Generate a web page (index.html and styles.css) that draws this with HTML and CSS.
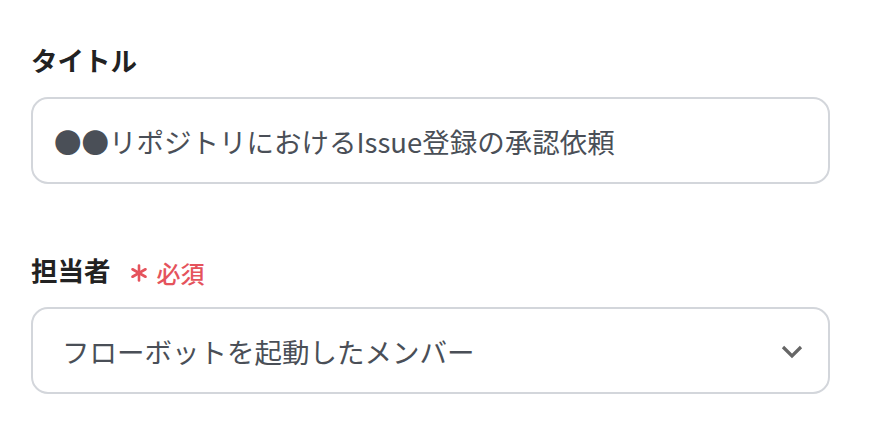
FILE: index.html
```html
<!DOCTYPE html>
<html lang="ja">
<head>
<meta charset="utf-8">
<link rel="stylesheet" href="styles.css">
</head>
<body>
<div class="form">
  <div class="field">
    <div class="label"><span class="label-text">タイトル</span></div>
    <div class="input">●●リポジトリにおけるIssue登録の承認依頼</div>
  </div>
  <div class="field field-2">
    <div class="label">
      <span class="label-text">担当者</span>
      <span class="required">
        <svg class="star" viewBox="0 0 18 18" width="18" height="18" aria-hidden="true">
          <g stroke="#e5535c" stroke-width="2.6" stroke-linecap="round">
            <line x1="9" y1="1.5" x2="9" y2="16.5"/>
            <line x1="2.5" y1="5.25" x2="15.5" y2="12.75"/>
            <line x1="2.5" y1="12.75" x2="15.5" y2="5.25"/>
          </g>
        </svg>
        <span class="req-text">必須</span>
      </span>
    </div>
    <div class="select">
      <span class="select-text">フローボットを起動したメンバー</span>
      <svg class="chev" viewBox="0 0 22 14" width="22" height="14" aria-hidden="true">
        <polyline points="2,2 11,11 20,2" fill="none" stroke="#666" stroke-width="3.2"/>
      </svg>
    </div>
  </div>
</div>
</body>
</html>
```

FILE: styles.css
```css
html, body {
  margin: 0;
  padding: 0;
  background: #fff;
}
body {
  font-family: "Noto Sans CJK JP", "Noto Sans", sans-serif;
}
.form {
  padding: 42px 46px 0 31px;
  display: flex;
  flex-direction: column;
}
.field {
  display: flex;
  flex-direction: column;
}
.field-2 {
  margin-top: 68px;
}
.label {
  display: flex;
  align-items: center;
  height: 36px;
  margin-bottom: 19px;
}
.label-text {
  font-size: 26.5px;
  font-weight: 700;
  color: #222;
  line-height: 36px;
}
.required {
  display: flex;
  align-items: center;
  margin-left: 19px;
  margin-top: 5px;
}
.star {
  display: block;
}
.req-text {
  margin-left: 9px;
  font-size: 24px;
  font-weight: 500;
  color: #e5535c;
  line-height: 30px;
}
.input, .select {
  box-sizing: border-box;
  height: 87px;
  border: 2px solid #d3d6db;
  border-radius: 17px;
  display: flex;
  align-items: center;
  font-size: 27.5px;
  color: #4a4f57;
}
.input {
  padding-left: 21px;
}
.select {
  padding-left: 29px;
  padding-right: 25px;
  justify-content: space-between;
}
.chev {
  display: block;
  margin-top: 3px;
}
```
